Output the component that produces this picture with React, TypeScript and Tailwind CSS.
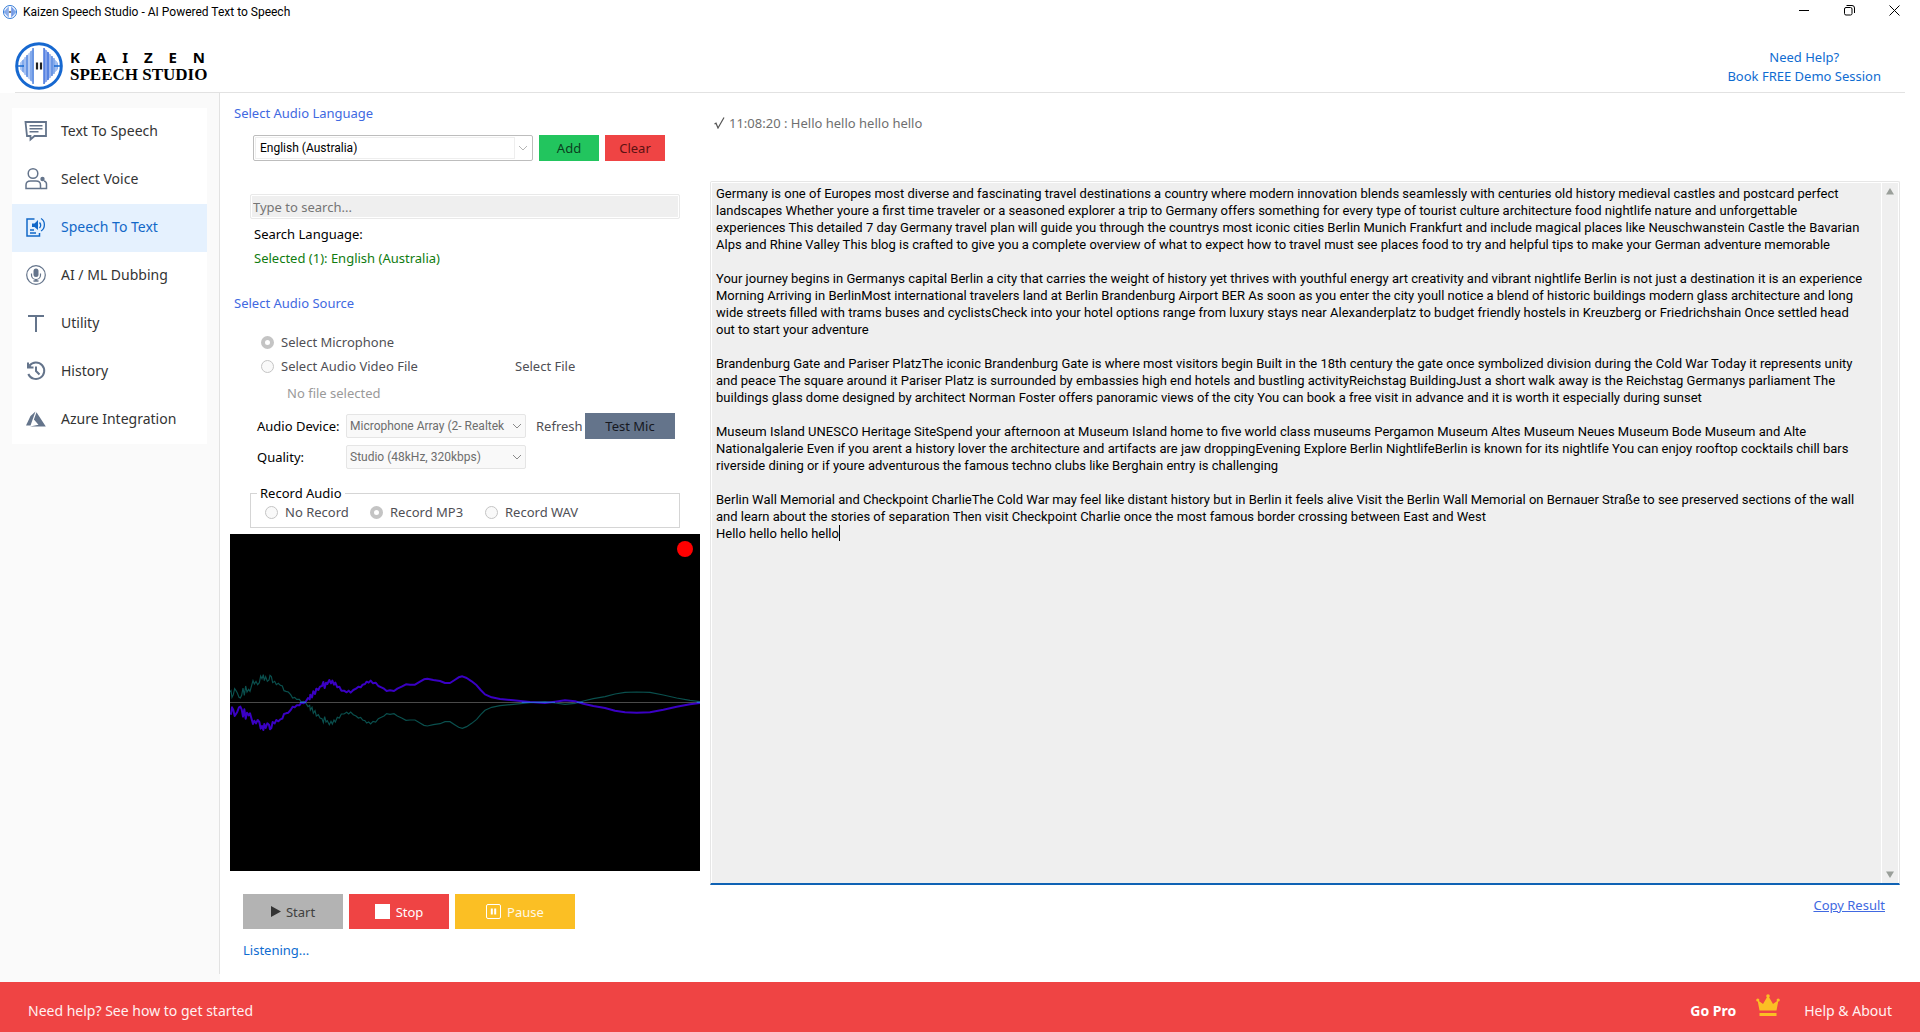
import React from 'react';

const LINE = '#64748b';

function LogoMark({ size }: { size: number }) {
  const bars = [
    [6, 20, 28, '#bcd2f5'], [8, 18, 30, '#7ea6ea'], [10, 15, 33, '#a9c4f2'], [12, 13, 35, '#5b8be0'],
    [14, 11, 37, '#c3d6f6'], [16, 9, 39, '#7ea6ea'], [18, 6, 42, '#5b8be0'],
    [29, 6, 42, '#3f6fdc'], [31, 8, 40, '#7f9cea'], [33, 10, 38, '#3f6fdc'], [35, 12, 36, '#9db6f0'],
    [37, 14, 34, '#5b8be0'], [39, 16, 32, '#7ea6ea'], [41, 19, 29, '#a9c4f2'],
  ] as [number, number, number, string][];
  return (
    <svg width={size} height={size} viewBox="0 0 48 48" aria-hidden="true">
      <circle cx="24" cy="24" r="22.3" fill="#fff" stroke="#1668d0" strokeWidth="3" />
      <path d="M19 6 5 21v6l14 15z" fill="#8fb2ee" />
      <path d="M29 6 43 21v6L29 42z" fill="#8fb2ee" />
      {bars.map(([x, a, b, c]) => (
        <path key={x} d={`M${x} ${a}V${b}`} stroke={c} strokeWidth="1.4" />
      ))}
      <path d="M2 24h7M39 24h7" stroke="#1668d0" strokeWidth="1.5" />
      <path d="M22 20.500v7M26 20.500v7" stroke="#222" strokeWidth="2.200" />
    </svg>
  );
}

const IconChat = () => (
  <svg width="24" height="22" viewBox="0 0 24 22" fill="none" stroke={LINE} strokeWidth="1.8">
    <path d="M1.500 2h20.500v14H10.500L6.500 19.500v-3.500H3z" />
    <path d="M5.500 5.800h13M5.500 8.800h13M5.500 11.800h9" strokeWidth="1.500" />
  </svg>
);
const IconVoice = () => (
  <svg width="24" height="24" viewBox="0 0 24 24" fill="none" stroke={LINE} strokeWidth="1.500">
    <circle cx="9" cy="6.500" r="4.800" />
    <path d="M2 21.500V18c0-2.500 2-4 4.500-4h5.500c2.500 0 4.500 1.500 4.500 4v3.500z" />
    <circle cx="18.500" cy="12" r="2.200" fill={LINE} stroke="none" />
    <path d="M17 21.500h5.500V17c0-1.500-.8-2.500-2.500-3" />
  </svg>
);
const IconSpeech = () => (
  <svg width="24" height="24" viewBox="0 0 24 24" fill="none" stroke="#1268c8" strokeWidth="1.500">
    <path d="M10.500 4H3v17h12.500v-3" />
    <path d="M8 8.500h2.500L14 5v10l-3.500-3H8z" fill="#1268c8" stroke="none" />
    <path d="M15.500 7.500c1.300 1.500 1.300 4 0 5.500M17 3.500c4.500 2.500 4.500 10 0 12.500" strokeWidth="1.300" />
    <path d="M6 15h4M6 18h6" strokeWidth="1.300" />
  </svg>
);
const IconMic = () => (
  <svg width="24" height="24" viewBox="0 0 24 24" fill="none" stroke={LINE} strokeWidth="1.200">
    <circle cx="12" cy="12" r="9.300" />
    <rect x="9.500" y="5.500" width="5" height="8.500" rx="2.500" fill={LINE} stroke="none" />
    <path d="M7.500 10.500v1.500a4.500 4.500 0 0 0 9 0v-1.500" />
    <path d="M12 16v2M9.500 18h5" strokeWidth="1.500" />
  </svg>
);
const IconT = () => (
  <svg width="24" height="24" viewBox="0 0 24 24" fill="none" stroke={LINE} strokeWidth="2">
    <path d="M4 5h16M12 5v16" />
  </svg>
);
const IconHistory = () => (
  <svg width="24" height="24" viewBox="0 0 24 24" fill="none" stroke={LINE} strokeWidth="2">
    <path d="M5.500 6.500A8.300 8.300 0 1 1 4.300 15" />
    <path d="M4 3.500v5h5.500" />
    <path d="M3.500 4v4.500h4.500z" fill={LINE} stroke="none" />
    <path d="M12 7.500V12l3.500 3.500" />
  </svg>
);
const IconAzure = () => (
  <svg width="24" height="24" viewBox="0 0 24 24" fill={LINE}>
    <path d="M11.500 4.500 6.500 9 2 18.500h4.500z" />
    <path d="m12.500 5.200-2.600 7.300 4.600 5.300-8.500 1.700h15.800z" />
  </svg>
);

const NAV: [string, () => React.JSX.Element][] = [
  ['Text To Speech', IconChat],
  ['Select Voice', IconVoice],
  ['Speech To Text', IconSpeech],
  ['AI / ML Dubbing', IconMic],
  ['Utility', IconT],
  ['History', IconHistory],
  ['Azure Integration', IconAzure],
];

const TRANSCRIPT = `Germany is one of Europes most diverse and fascinating travel destinations a country where modern innovation blends seamlessly with centuries old history medieval castles and postcard perfect
landscapes Whether youre a first time traveler or a seasoned explorer a trip to Germany offers something for every type of tourist culture architecture food nightlife nature and unforgettable
experiences This detailed 7 day Germany travel plan will guide you through the countrys most iconic cities Berlin Munich Frankfurt and include magical places like Neuschwanstein Castle the Bavarian
Alps and Rhine Valley This blog is crafted to give you a complete overview of what to expect how to travel must see places food to try and helpful tips to make your German adventure memorable

Your journey begins in Germanys capital Berlin a city that carries the weight of history yet thrives with youthful energy art creativity and vibrant nightlife Berlin is not just a destination it is an experience
Morning Arriving in BerlinMost international travelers land at Berlin Brandenburg Airport BER As soon as you enter the city youll notice a blend of historic buildings modern glass architecture and long
wide streets filled with trams buses and cyclistsCheck into your hotel options range from luxury stays near Alexanderplatz to budget friendly hostels in Kreuzberg or Friedrichshain Once settled head
out to start your adventure

Brandenburg Gate and Pariser PlatzThe iconic Brandenburg Gate is where most visitors begin Built in the 18th century the gate once symbolized division during the Cold War Today it represents unity
and peace The square around it Pariser Platz is surrounded by embassies high end hotels and bustling activityReichstag BuildingJust a short walk away is the Reichstag Germanys parliament The
buildings glass dome designed by architect Norman Foster offers panoramic views of the city You can book a free visit in advance and it is worth it especially during sunset

Museum Island UNESCO Heritage SiteSpend your afternoon at Museum Island home to five world class museums Pergamon Museum Altes Museum Neues Museum Bode Museum and Alte
Nationalgalerie Even if you arent a history lover the architecture and artifacts are jaw droppingEvening Explore Berlin NightlifeBerlin is known for its nightlife You can enjoy rooftop cocktails chill bars
riverside dining or if youre adventurous the famous techno clubs like Berghain entry is challenging

Berlin Wall Memorial and Checkpoint CharlieThe Cold War may feel like distant history but in Berlin it feels alive Visit the Berlin Wall Memorial on Bernauer Straße to see preserved sections of the wall
and learn about the stories of separation Then visit Checkpoint Charlie once the most famous border crossing between East and West
Hello hello hello hello`;

const WAVE: [number, number][] = [
  [30, 548], [33, 552], [36, 532], [40, 540], [44, 558], [48, 552], [52, 545], [57, 532], [61, 530], [65, 538],
  [69, 560], [73, 538], [77, 566], [81, 548], [86, 556], [90, 550], [95, 568], [99, 582], [103, 572], [108, 580],
  [113, 570], [118, 576], [122, 596], [126, 588], [130, 600], [133, 582], [137, 594], [142, 580], [147, 584],
  [150, 598], [154, 594], [158, 576], [164, 580], [169, 570], [175, 574], [181, 568], [187, 566], [192, 552],
  [198, 550], [205, 548], [212, 540], [218, 530], [224, 532], [230, 526], [238, 526], [244, 518], [251, 520],
  [258, 514], [264, 504], [269, 508], [271, 494], [276, 502], [280, 484], [285, 492], [289, 476], [295, 480],
  [300, 470], [306, 468], [310, 456], [314, 474], [318, 458], [322, 462], [328, 450], [333, 460], [337, 452],
  [342, 464], [346, 458], [352, 472], [358, 470], [364, 482], [372, 482], [380, 487], [386, 482], [392, 488],
  [400, 480], [408, 476], [415, 470], [422, 472], [428, 464], [435, 462], [440, 455], [446, 458], [452, 452],
  [459, 460], [467, 458], [475, 468], [484, 472], [492, 476], [500, 483], [510, 481], [522, 483], [532, 476],
  [545, 470], [558, 463], [570, 464], [585, 464], [600, 455], [612, 448], [622, 446], [640, 450], [660, 453],
  [675, 459], [690, 459], [704, 450], [716, 442], [727, 439], [740, 444], [755, 454], [770, 466], [782, 480],
  [795, 493], [815, 502], [840, 507], [880, 511], [930, 516], [975, 519], [1005, 515], [1035, 511], [1065, 514],
  [1090, 521], [1120, 528], [1155, 534], [1185, 542], [1215, 547], [1250, 548], [1290, 547], [1330, 539],
  [1370, 530], [1410, 523], [1440, 519],
];
const toPath = (pts: [number, number][]) => 'M' + pts.map((p) => p.join(' ')).join('L');

function Chevron({ color = '#8a8a8a' }: { color?: string }) {
  return (
    <svg className="pointer-events-none absolute top-1/2 right-1 -mt-1" width="10" height="8" viewBox="0 0 10 8" fill="none" stroke={color} aria-hidden="true">
      <path d="m1 2 4 4 4-4" />
    </svg>
  );
}

function Radio({ name, label, checked }: { name: string; label: string; checked?: boolean }) {
  return (
    <label className="flex h-5 items-center gap-[7px] text-[#4f4f55]">
      <input
        type="radio"
        name={name}
        defaultChecked={checked}
        className="size-[13px] shrink-0 appearance-none rounded-full border border-[#c4c4c4] bg-[#f9f9f9] checked:border-4 checked:border-[#c4c4c4] checked:bg-white"
      />
      {label}
    </label>
  );
}

export default function App() {
  return (
    <div className="flex min-h-screen flex-col bg-white font-['Noto_Sans',sans-serif] text-[13px] leading-5 text-black">
      <div className="flex h-6 items-center justify-between pr-5 pl-[3px]">
        <div className="flex items-center gap-[6px] font-['Roboto',sans-serif] text-xs">
          <LogoMark size={14} />
          <span>Kaizen Speech Studio - AI Powered Text to Speech</span>
        </div>
        <div className="-mt-1 flex items-center gap-[34px]">
          <button aria-label="Minimize"><svg width="11" height="11" viewBox="0 0 11 11" stroke="#000"><path d="M0 5.500h10" /></svg></button>
          <button aria-label="Restore"><svg width="11" height="11" viewBox="0 0 11 11" fill="none" stroke="#000"><rect x=".5" y="2.500" width="7.500" height="7.500" rx="1.500" /><path d="M2.500.5h5.500a2.500 2.500 0 0 1 2.500 2.500v5" /></svg></button>
          <button aria-label="Close"><svg width="11" height="11" viewBox="0 0 11 11" stroke="#000"><path d="m.5.5 10 10M10.500.5l-10 10" /></svg></button>
        </div>
      </div>

      <header className="mr-[15px] ml-[15px] flex h-[69px] items-start justify-between border-b border-[#e2e2e2]">
        <div className="flex gap-[7px] pt-[18px]">
          <LogoMark size={48} />
          <div className="w-[139px] pt-1 font-bold">
            <div className="h-[19px] pr-1 text-[15px] leading-[22px] [text-align-last:justify]">K A I Z E N</div>
            <div className="font-['Liberation_Serif',serif] text-[17px] leading-5 whitespace-nowrap">SPEECH STUDIO</div>
          </div>
        </div>
        <div className="flex flex-col items-center pt-6 pr-[24px] leading-[19px] text-[#0f6cd1]">
          <a href="#help">Need Help?</a>
          <a href="#demo">Book FREE Demo Session</a>
        </div>
      </header>

      <div className="flex flex-1">
        <div className="w-[220px] bg-[#fafafa] pb-2">
          <nav className="h-full border-r border-[#e2e2e2] pt-[15px] pr-3 pl-3">
            <div className="bg-white">
              {NAV.map(([label, Icon]) => (
                <a
                  key={label}
                  href={'#' + label}
                  className={
                    'flex h-12 items-center gap-[13px] pb-0.5 pl-3 text-sm ' +
                    (label === 'Speech To Text' ? 'bg-[#e5f1fe] text-[#1268c8]' : 'text-[#333]')
                  }
                >
                  <Icon />
                  {label}
                </a>
              ))}
            </div>
          </nav>
        </div>

        <section className="w-[490px] pt-2.5 pl-2.5">
          <h2 className="pl-1 text-[#4169e1]">Select Audio Language</h2>
          <div className="mt-3 flex gap-[6px] pl-[23px]">
            <div className="relative w-[280px] rounded-xs border border-[#bdbdbd] p-px">
              <select aria-label="Audio language" className="block h-[22px] w-[260px] appearance-none border border-[#eee] pl-1 font-['Roboto',sans-serif] text-xs">
                <option>English (Australia)</option>
              </select>
              <Chevron color="#b5b5b5" />
            </div>
            <button className="h-[26px] w-[60px] bg-[#22c55e] text-[#0b3f1e]">Add</button>
            <button className="h-[26px] w-[60px] bg-[#ef4444] text-[#5c1212]">Clear</button>
          </div>
          <input
            id="search"
            placeholder="Type to search..."
            className="mt-[33px] ml-5 block h-[25px] w-[430px] rounded-xs border border-[#e9e9e9] bg-[#efefef] pl-0.5 outline-1 -outline-offset-2 outline-white placeholder:text-[#757575]"
          />
          <label htmlFor="search" className="mt-[5px] ml-6 block">Search Language:</label>
          <p className="mt-1 ml-6 text-[#107c10]">Selected (1): English (Australia)</p>

          <h2 className="mt-[25px] pl-1 text-[#4169e1]">Select Audio Source</h2>
          <div className="mt-[19px] pl-[31px]">
            <Radio name="source" label="Select Microphone" checked />
            <div className="mt-1 flex">
              <div className="w-[254px]"><Radio name="source" label="Select Audio Video File" /></div>
              <button className="text-[#4f4f55]">Select File</button>
            </div>
          </div>
          <p className="mt-[7px] pl-[57px] text-[#9a9a9a]">No file selected</p>

          <div className="mt-2.5 flex h-[26px] items-center pl-[27px]">
            <label htmlFor="device" className="w-[89px] whitespace-nowrap">Audio Device:</label>
            <div className="relative w-[180px]">
              <select id="device" className="block h-6 w-full appearance-none rounded-xs border border-[#e5e5e5] bg-[#f9f9f9] pr-4 pl-[3px] font-['Roboto',sans-serif] text-xs text-[#6d6d6d]">
                <option>Microphone Array (2- Realtek</option>
              </select>
              <Chevron />
            </div>
            <button className="ml-2.5 w-[49px] text-left text-[#4f4f55]">Refresh</button>
            <button className="h-[26px] w-[90px] bg-[#64748b] text-[#16181f]">Test Mic</button>
          </div>
          <div className="mt-1.5 flex h-6 items-center pl-[27px]">
            <label htmlFor="quality" className="w-[89px]">Quality:</label>
            <div className="relative w-[180px]">
              <select id="quality" className="block h-6 w-full appearance-none rounded-xs border border-[#e5e5e5] bg-[#f9f9f9] pr-4 pl-[3px] font-['Roboto',sans-serif] text-xs text-[#6d6d6d]">
                <option>Studio (48kHz, 320kbps)</option>
              </select>
              <Chevron />
            </div>
          </div>

          <fieldset className="mt-[14px] ml-5 h-[45px] w-[430px] border border-[#d5d5d5] pl-[14px]">
            <legend className="-ml-[8px] px-[3px]">Record Audio</legend>
            <div className="-mt-px flex gap-[20px]">
              <div className="w-[85px] whitespace-nowrap"><Radio name="record" label="No Record" /></div>
              <div className="w-[95px] whitespace-nowrap"><Radio name="record" label="Record MP3" checked /></div>
              <Radio name="record" label="Record WAV" />
            </div>
          </fieldset>

          <div className="relative mt-[6px] h-[337px] w-[470px] bg-black">
            <svg className="block h-full w-full" viewBox="30 12 1410 1011" preserveAspectRatio="none" fill="none">
              <path d="M30 517.500H1440" stroke="#4a4a4a" strokeWidth="3" />
              <path d={toPath(WAVE.map(([x, y]) => [x, 1034 - y]))} stroke="#0a504e" strokeWidth="3.500" />
              <path d={toPath(WAVE)} stroke="#3a00c4" strokeWidth="6" strokeLinejoin="round" />
              <path d="M240 517h18M905 517h100M1070 517h20M1430 517h10" stroke="#2f62d8" strokeWidth="4" />
            </svg>
            <span className="absolute top-[7px] right-[7px] size-4 rounded-full bg-[#f00]" />
          </div>

          <div className="mt-[23px] flex gap-[6px] pl-[13px]">
            <button className="flex h-[35px] w-[100px] items-center justify-center gap-[5px] bg-[#b3b3b3] text-[#404040]">
              <svg width="10" height="11" viewBox="0 0 10 11" fill="#333"><path d="M0 0v11l10-5.500z" /></svg>
              Start
            </button>
            <button className="flex h-[35px] w-[100px] items-center justify-center gap-[6px] bg-[#ef4444] text-[#fff]">
              <span className="size-[15px] bg-white" />
              Stop
            </button>
            <button className="flex h-[35px] w-[120px] items-center justify-center gap-[6px] bg-[#fbbf24] text-[#fff8e6]">
              <svg width="15" height="15" viewBox="0 0 15 15" fill="none" stroke="#fff"><rect x=".5" y=".5" width="14" height="14" rx="1.500" /><path d="M5.800 4.500v6M9.200 4.500v6" strokeWidth="2" /></svg>
              Pause
            </button>
          </div>
          <p className="mt-[11px] pl-[13px] text-[#0f6cd1]">Listening...</p>
        </section>

        <section className="flex min-w-0 flex-1 flex-col pt-5 pr-5 pb-[67px]">
          <p className="flex items-center gap-1 pl-1 text-[#6f6f6f]">
            <svg width="11" height="12" viewBox="0 0 11 12" fill="none" stroke="#555" strokeWidth="1.200"><path d="m.5 7 1.500-.8L4 11 10 .5" /></svg>
            11:08:20 : Hello hello hello hello
          </p>
          <div className="relative mt-12 flex flex-1 rounded-t-xs border border-b-2 border-[#e6e6e6] border-b-[#0f62b4] bg-white px-px pt-px font-['Roboto',sans-serif] leading-[17px]">
            <textarea
              aria-label="Transcript"
              defaultValue={TRANSCRIPT}
              spellCheck={false}
              className="block min-w-0 flex-1 resize-none overflow-hidden bg-[#efefef] px-1 pt-0.5 whitespace-pre outline-none"
            />
            <div className="ml-px flex w-4 flex-col items-center justify-between bg-[#efefef] py-[5px]">
              <svg width="8" height="7" viewBox="0 0 8 7" fill="#9a9f9a"><path d="M4 0 8 6.500H0z" /></svg>
              <svg width="8" height="7" viewBox="0 0 8 7" fill="#9a9f9a"><path d="M4 7 8 .5H0z" /></svg>
            </div>
            <div className="pointer-events-none absolute top-[343px] left-[5px] h-4 border-r border-black select-none" aria-hidden="true">
              <span className="invisible">Hello hello hello hello</span>
            </div>
          </div>
          <a href="#copy" className="mt-[10px] mr-[15px] self-end text-[#4169e1] underline">Copy Result</a>
        </section>
      </div>

      <footer className="flex h-[50px] items-center bg-[#ef4444] pt-2 pr-[28px] pl-7 text-sm text-[#fff1f1]">
        <a href="#start" className="mr-auto">Need help? See how to get started</a>
        <a href="#pro" className="font-bold text-white">Go Pro</a>
        <svg className="-mt-3 mr-6 ml-5" width="24" height="23" viewBox="0 0 24 23" fill="#fbbf24" aria-hidden="true">
          <path d="m3.500 16.500-2-10.500 5.500 4L12 1.500 17 10l5.500-4-2 10.500z" />
          <circle cx="12" cy="2" r="1.800" /><circle cx="1.800" cy="6" r="1.600" /><circle cx="22.200" cy="6" r="1.600" />
          <path d="M3.500 19h17v3h-17z" />
        </svg>
        <a href="#about">Help &amp; About</a>
      </footer>
    </div>
  );
}
